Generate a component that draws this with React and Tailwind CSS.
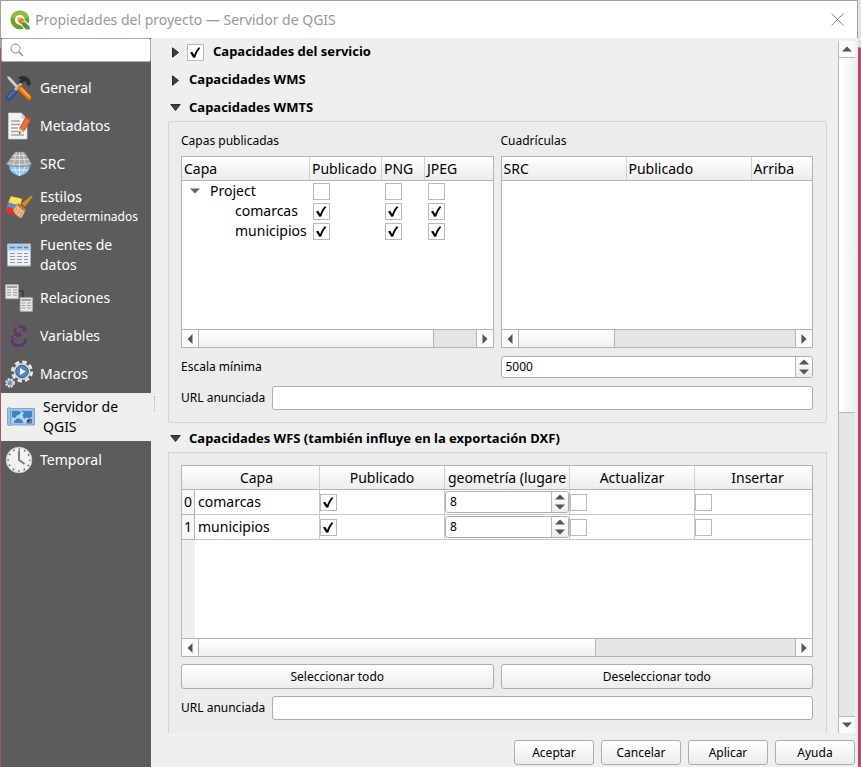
import { useState } from 'react';
import clsx from 'clsx';

const BTN = 'border border-[#adadad] rounded-[3px] bg-gradient-to-b from-white to-[#ececec] hover:to-white text-center';

function LogoIcon() {
  return (
    <svg viewBox="0 0 20 20" className="w-5 h-5 shrink-0">
      <circle cx="9.800" cy="9.800" r="7.200" fill="none" stroke="#6aa32f" strokeWidth="4.400" />
      <path d="M2.900 7.800a7.200 7.200 0 0 1 13.800 0" fill="none" stroke="#8fbf3f" strokeWidth="4.400" />
      <path d="M10.500 10.500l9.500 9.500" stroke="#fff" strokeWidth="6.500" />
      <path d="M12 12.200h3.200l4.500 4.600v2.700h-3.400L12 15.200z" fill="#589632" />
      <path d="M7.800 7.800h4.400l2.300 2.600v1h-2.600v2.700h-1.400L7.800 11.600z" fill="#ee7913" />
      <path d="M7.800 7.800h4.400l-1.700 2.400-2.700 1.400z" fill="#f3a53d" />
    </svg>
  );
}

function ToolsIcon() {
  return (
    <svg viewBox="0 0 26 26" className="w-[26px] h-[26px]">
      <path d="M1 1l3 1 11 12-2 2L2 4z" fill="#d3d7cf" stroke="#888" strokeWidth=".5" />
      <path d="M12 3c3-3 8-2.500 10 0 2 1.500 3 4 2.500 6l-1.500 2-2-1-1-3-2-.5-3 3-2.500-2 2.500-3-3-1.500z" fill="#2b2f31" />
      <path d="M14.500 7.500l2 2L8 18l-2-2z" fill="#b9bdb6" />
      <path d="M8 14.500l3 3-7 7c-1 1-2.500.7-3.300-.3-.8-.9-.8-2 .3-3z" fill="#2f5f9e" stroke="#1c3f72" strokeWidth=".8" />
      <path d="M8.300 16l-6 6" stroke="#6f9bd1" strokeWidth="1" />
      <path d="M12.500 12l2.500-1.500 10 10.500c.8 1 .6 2.600-.2 3.400-.9.9-2.400.8-3.400-.1L12 15z" fill="#f57900" stroke="#b85400" strokeWidth=".8" />
      <path d="M15 13l8.500 9" stroke="#fcb56a" strokeWidth="1.200" />
    </svg>
  );
}

function MetadataIcon() {
  return (
    <svg viewBox="0 0 26 28" className="w-[26px] h-7">
      <path d="M2.500 1h13l5.500 6v20H2.500z" fill="#f4f4f4" stroke="#d0d0d0" strokeWidth=".7" />
      <path d="M15.500 1v6H21z" fill="#cfcfcf" />
      <path d="M5 9h9M5 12.500h9M5 16h7M5 19.500h13M5 23h13" stroke="#a2a4a2" strokeWidth="1.300" />
      <path d="M20.500 4l5 3-7.500 12-4.500-2.700z" fill="#ea7238" stroke="#a84315" strokeWidth=".7" />
      <path d="M20.500 4l5 3-1.100 1.900-5-3.100z" fill="#b9483a" />
      <path d="M13.500 16.300l4.500 2.700-5 3.300z" fill="#e9c79a" />
      <path d="M13.200 19.900l1.600 1.100-1.900 1.300z" fill="#333" />
    </svg>
  );
}

function GlobeIcon() {
  return (
    <svg viewBox="0 0 26 26" className="w-[26px] h-[26px]">
      <circle cx="13.500" cy="14" r="10.700" fill="#8fc3ea" stroke="#4484bd" />
      <path d="M3 14h21M5 19h17M13.500 14v11M8.500 14c0 5 2 9 5 10.500M18.500 14c0 5-2 9-5 10.500" stroke="#e6f3fc" fill="none" />
      <path d="M9 1h9l3 4 5 8.500-6 1.500-7 .6-7-.6-6-1.500L6 5z" fill="#aaacaa" stroke="#777" strokeWidth=".7" />
      <path d="M6.500 4.500h14M4 8.500h19M1.500 12c8 2 16 2 23 0M13.500 1v14.500M10.500 1L7 15M16.500 1L20 15" stroke="#e9e9e9" strokeWidth=".7" fill="none" />
    </svg>
  );
}

function StylesIcon() {
  return (
    <svg viewBox="0 0 28 24" className="w-7 h-6">
      <path d="M6 1c4 2 7 1 11 3l-2 7-12-3z" fill="#fbe44b" />
      <path d="M3.500 7c4 2 7 2 11 3l-3 5-10-3z" fill="#5b8fd0" />
      <path d="M1.500 11c4 2 7 2 10 3l5 7c-6-.5-11-2-16-4z" fill="#e0352b" />
      <path d="M16 8.500L26 .8c1-.6 2.300.6 1.500 1.700L20 12z" fill="#d08a2e" stroke="#94601c" strokeWidth=".7" />
      <path d="M13.500 8l7.500 6.500-1 2-8-6.500z" fill="#b77b2d" />
      <path d="M12 10l8 6.500-3.500 6.500C12 22 9 18 8 14.500z" fill="#e6bf85" stroke="#b07f3c" strokeWidth=".7" />
      <path d="M12.500 12.500L10.500 16M15 14l-2.500 5M17.500 16l-2.500 5.500" stroke="#b98746" strokeWidth=".8" />
    </svg>
  );
}

function SourcesIcon() {
  return (
    <svg viewBox="0 0 26 24" className="w-[26px] h-6">
      <path d="M1.500 1h23v22h-23z" fill="#eef2f6" stroke="#9dbbd8" />
      <path d="M2 1.500h22v6H2z" fill="#a9cdee" />
      <path d="M4 4.500h5M11 4.500h5M18 4.500h4" stroke="#4f83b6" strokeWidth="1.600" />
      <path d="M4 10.500h5M11 10.500h5M18 10.500h4M4 13.500h5M11 13.500h5M18 13.500h4M4 16.500h5M11 16.500h5M18 16.500h4M4 19.500h5M11 19.500h5M18 19.500h4" stroke="#8d979f" strokeWidth="1.200" />
    </svg>
  );
}

function RelationsIcon() {
  return (
    <svg viewBox="0 0 28 28" className="w-7 h-7">
      <path d="M13 7h5v7" fill="none" stroke="#33383a" strokeWidth="1.300" />
      <path d="M.7.700h12.600v14H.7zM15.200 13.700h12.200v13.600H15.200z" fill="#e9e9e7" stroke="#b8b8b6" strokeWidth=".8" />
      <path d="M2 3h10M16.500 16h9.600" stroke="#8a8c8a" strokeWidth="1.500" />
      <path d="M2 6h4M8 6h4M2 8.500h4M8 8.500h4M2 11h4M8 11h4M16.500 19h4M22 19h4M16.500 21.500h4M22 21.500h4M16.500 24h4M22 24h4" stroke="#9c9e9c" strokeWidth="1.100" />
    </svg>
  );
}

function VariablesIcon() {
  return (
    <svg viewBox="0 0 20 24" className="w-5 h-6">
      <path d="M16 6C15.500 2.500 12.500 2 10 2.300 6.500 2.800 4.500 5.500 6 8.500c1 2 3 2.600 6 2.700-4.500 0-8.500 1.500-9 5-.4 3.300 2.500 5.300 6.500 5.300 3.300 0 6.500-1.500 7-5" fill="none" stroke="#5f3768" strokeWidth="2.800" strokeLinecap="round" />
      <circle cx="15.500" cy="5.700" r="2.100" fill="#5f3768" />
      <path d="M6 4.500c1-1.500 2.500-2.200 4-2.300M3.500 15c.8-1.500 2-2.200 3.500-2.700" stroke="#86608e" fill="none" />
    </svg>
  );
}

function MacrosIcon() {
  return (
    <svg viewBox="0 0 28 28" className="w-7 h-7">
      <circle cx="17" cy="11.500" r="9.300" fill="none" stroke="#e8e8e6" strokeWidth="3.500" strokeDasharray="4.300 3" />
      <circle cx="17" cy="11.500" r="8.200" fill="#dfe0de" stroke="#babdb6" strokeWidth=".6" />
      <circle cx="17" cy="11.500" r="6.300" fill="#4f87c4" stroke="#2f5f9a" />
      <path d="M15 8l5.700 3.500L15 15z" fill="#fff" />
      <circle cx="5" cy="23" r="4" fill="none" stroke="#dededc" strokeWidth="1.800" strokeDasharray="2 1.200" />
      <circle cx="5" cy="23" r="3" fill="#6c9bd0" stroke="#dededc" />
    </svg>
  );
}

function ServerIcon() {
  return (
    <svg viewBox="0 0 28 20" className="w-7 h-5">
      <path d="M.5 1.500C1.500.5 3 .5 4 1.500h23.500v16.500H4c-1.500 1-3 .7-3.500-.5z" fill="#9cc3e5" stroke="#6d9cc6" strokeWidth=".8" />
      <path d="M3.500 3v14.500" stroke="#6d9cc6" strokeWidth=".8" />
      <path d="M5 4h20v8l-5 4H5z" fill="#b5d6f0" />
      <path d="M5 4h7l2 1-1.500 2.500-2 .5L8 11l-3-1zM14 4h11v6l-3 1.500-2.500-1L17 12l-1.500-4 1.500-2zM7 14l4-3 4 2 1.500 3H7z" fill="#3d85c6" />
      <path d="M25 11.500l-5.500 5 .8-3.800z" fill="#1f3044" />
      <path d="M25 11.500v5h-5.500z" fill="#4b7fae" />
    </svg>
  );
}

function ClockIcon() {
  return (
    <svg viewBox="0 0 28 28" className="w-7 h-7">
      <circle cx="14" cy="14" r="12.800" fill="#f2f2f1" stroke="#c9cbc8" />
      <circle cx="14" cy="14" r="10.800" fill="none" stroke="#4a6e96" strokeWidth="1.700" strokeDasharray="1.500 4.150" strokeDashoffset=".7" />
      <path d="M14 4.500V14l5.500 4" fill="none" stroke="#7b7f7c" strokeWidth="2" />
    </svg>
  );
}

function Arrow({ dir, className }) {
  const paths = {
    up: 'M0 7.500l5-5 5 5z',
    down: 'M0 2.500l5 5 5-5z',
    left: 'M7.500 0l-5 5 5 5z',
    right: 'M2.500 0l5 5-5 5z',
  };
  return (
    <svg viewBox="0 0 10 10" className={clsx('shrink-0 fill-current', className)}>
      <path d={paths[dir]} />
    </svg>
  );
}

function Check({ checked = false, label }) {
  const [on, setOn] = useState(checked);
  return (
    <span className="inline-grid w-[17px] h-[17px] align-middle">
      <input
        type="checkbox"
        aria-label={label}
        checked={on}
        onChange={e => setOn(e.target.checked)}
        className="appearance-none col-start-1 row-start-1 w-full h-full border border-[#b9b9b9] bg-white"
      />
      {on && (
        <svg viewBox="0 0 17 17" className="col-start-1 row-start-1 w-full h-full pointer-events-none">
          <path d="M3 8.400l2.200-.7 2 3.300c1-3 2.600-5.600 4.600-7.700l1.500.6c-2.300 2.700-4 6-5 9.700l-2 .1z" fill="#000" />
        </svg>
      )}
    </span>
  );
}

function SpinBox({ value, label, id }) {
  return (
    <div className="flex h-[22px] border border-[#adadad] rounded-[3px] bg-white overflow-hidden">
      <input
        id={id}
        type="text"
        aria-label={label}
        defaultValue={value}
        className="flex-1 min-w-0 px-1 text-xs text-black outline-none"
      />
      <div className="flex flex-col w-[17px] border-l border-[#b9b9b9] bg-gradient-to-b from-white to-[#ececec] text-[#555]">
        <button aria-label="Aumentar" className="flex-1 flex items-center justify-center">
          <Arrow dir="up" className="w-[10px] h-[10px]" />
        </button>
        <button aria-label="Disminuir" className="flex-1 flex items-center justify-center">
          <Arrow dir="down" className="w-[10px] h-[10px]" />
        </button>
      </div>
    </div>
  );
}

function HScroll({ thumb }) {
  return (
    <div className="flex h-[18px] border-t border-[#b4b4b4] bg-[#e5e5e5] text-[#555]">
      <button aria-label="Desplazar a la izquierda" className="w-[17px] flex items-center justify-center border-r border-[#b4b4b4] bg-[#fafafa]">
        <Arrow dir="left" className="w-[10px] h-[10px]" />
      </button>
      <div className="flex-1">
        <div className={clsx('h-full border-r border-[#b4b4b4] bg-gradient-to-b from-white to-[#f0f0f0]', thumb)} />
      </div>
      <button aria-label="Desplazar a la derecha" className="w-[17px] flex items-center justify-center border-l border-[#b4b4b4] bg-[#fafafa]">
        <Arrow dir="right" className="w-[10px] h-[10px]" />
      </button>
    </div>
  );
}

const TH = 'h-6 p-0 font-normal border-b border-b-[#b4b4b4] border-r border-r-[#d0d0d0] last:border-r-0 bg-gradient-to-b from-white to-[#ececec] whitespace-nowrap overflow-hidden';

const PAGES = [
  { icon: ToolsIcon, label: 'General' },
  { icon: MetadataIcon, label: 'Metadatos' },
  { icon: GlobeIcon, label: 'SRC' },
  { icon: StylesIcon, label: 'Estilos', small: 'predeterminados', tall: true },
  { icon: SourcesIcon, label: 'Fuentes de datos', tall: true },
  { icon: RelationsIcon, label: 'Relaciones' },
  { icon: VariablesIcon, label: 'Variables' },
  { icon: MacrosIcon, label: 'Macros' },
  { icon: ServerIcon, label: 'Servidor de QGIS', tall: true },
  { icon: ClockIcon, label: 'Temporal' },
];

function Sidebar() {
  const [active, setActive] = useState('Servidor de QGIS');
  return (
    <aside className="w-[150px] shrink-0 bg-[#5c5c5c]">
      <div className="flex items-center h-6 pl-2 bg-white border border-[#a8a8a8] rounded-[2px]">
        <svg viewBox="0 0 14 14" className="w-[14px] h-[14px]" fill="none" stroke="#888">
          <circle cx="5.500" cy="5.500" r="4.500" />
          <path d="M8.500 8.500l4.500 4.500" strokeWidth="1.300" />
        </svg>
        <input type="search" aria-label="Buscar" className="flex-1 min-w-0 px-1 text-xs outline-none" />
      </div>
      <nav className="pt-[7px]">
        {PAGES.map(({ icon: Icon, label, small, tall }) => {
          const on = active === label;
          return (
            <button
              key={label}
              onClick={() => setActive(label)}
              className={clsx(
                'flex items-center w-full text-left text-sm leading-5',
                tall ? 'h-12' : 'h-[38px]',
                on ? 'bg-[#efefef] text-black pl-1.5 gap-2' : 'text-white pl-1 gap-[7px]',
              )}
            >
              <span className="flex w-7 shrink-0 justify-center">
                <Icon />
              </span>
              <span className={clsx(on && 'pr-6')}>
                {label}
                {small && <span className="block text-xs leading-5">{small}</span>}
              </span>
            </button>
          );
        })}
      </nav>
    </aside>
  );
}

function GroupTitle({ open, check, children }) {
  return (
    <h2 className={clsx('flex items-center pl-0.5 text-[13px] font-bold', open ? 'h-[27px]' : 'h-7')}>
      <button aria-label={open ? 'Contraer' : 'Expandir'} className={check ? 'mr-1.5' : 'mr-2'}>
        <svg viewBox="0 0 11 11" className="w-[11px] h-[11px] fill-[#404040] stroke-[#2a2a2a]">
          <path d={open ? 'M.8 2.500h9.400L5.500 8.500z' : 'M2.500.8v9.400l6-4.700z'} />
        </svg>
      </button>
      {check && (
        <span className="flex mr-[9px]">
          <Check checked label={children} />
        </span>
      )}
      {children}
    </h2>
  );
}

const TREE = [
  { name: 'Project', root: true },
  { name: 'comarcas' },
  { name: 'municipios' },
];

function LayerTree() {
  return (
    <div className="flex flex-col h-48 bg-white border border-[#b4b4b4] text-sm">
      <div className="flex-1 overflow-hidden">
        <table className="w-full table-fixed border-separate border-spacing-0 text-left">
          <colgroup>
            <col className="w-[128px]" />
            <col className="w-[72px]" />
            <col className="w-[43px]" />
            <col />
          </colgroup>
          <thead>
            <tr>
              {['Capa', 'Publicado', 'PNG', 'JPEG'].map(h => (
                <th key={h} className={clsx(TH, 'pl-0.5')}>{h}</th>
              ))}
            </tr>
          </thead>
          <tbody>
            {TREE.map(({ name, root }) => (
              <tr key={name} className="leading-5">
                <td className="p-0 whitespace-nowrap">
                  {root ? (
                    <span className="flex items-center pl-2 gap-[10px]">
                      <Arrow dir="down" className="w-[10px] h-[10px] text-[#666]" />
                      {name}
                    </span>
                  ) : (
                    <span className="block pl-[53px]">{name}</span>
                  )}
                </td>
                {['Publicado', 'PNG', 'JPEG'].map(c => (
                  <td key={c} className="p-0 pl-[3px] leading-none">
                    <Check checked={!root} label={`${name} ${c}`} />
                  </td>
                ))}
              </tr>
            ))}
          </tbody>
        </table>
      </div>
      <HScroll thumb="w-[85%]" />
    </div>
  );
}

function Grids() {
  return (
    <div className="flex flex-col h-48 bg-white border border-[#b4b4b4] text-sm">
      <div className="flex-1 overflow-hidden">
        <table className="w-full table-fixed border-separate border-spacing-0 text-left">
          <colgroup>
            <col className="w-[125px]" />
            <col className="w-[125px]" />
            <col />
          </colgroup>
          <thead>
            <tr>
              {['SRC', 'Publicado', 'Arriba'].map(h => (
                <th key={h} className={clsx(TH, 'pl-0.5')}>{h}</th>
              ))}
            </tr>
          </thead>
        </table>
      </div>
      <HScroll thumb="w-[35%]" />
    </div>
  );
}

function WfsTable() {
  const td = 'h-[25px] p-0 border-b border-r border-[#c8c8c8] last:border-r-0 leading-none';
  return (
    <div className="flex flex-col h-48 bg-white border border-[#b4b4b4] text-sm">
      <div className="flex-1 flex flex-col overflow-hidden">
        <table className="w-full table-fixed border-separate border-spacing-0">
          <colgroup>
            <col className="w-[13px]" />
            <col className="w-[125px]" />
            <col className="w-[125px]" />
            <col className="w-[125px]" />
            <col className="w-[125px]" />
            <col />
          </colgroup>
          <thead>
            <tr>
              <th colSpan={2} className={clsx(TH, 'pl-3')}>Capa</th>
              <th className={TH}>Publicado</th>
              <th className={TH}>geometría (lugare</th>
              <th className={TH}>Actualizar</th>
              <th className={clsx(TH, 'pl-2')}>Insertar</th>
            </tr>
          </thead>
          <tbody>
            {['comarcas', 'municipios'].map((name, i) => (
              <tr key={name}>
                <th className="p-0 font-normal border-b border-r border-[#b4b4b4] bg-[#f7f7f7]">{i}</th>
                <td className={clsx(td, 'pl-[3px]')}>{name}</td>
                <td className={td}><Check checked label={`${name} Publicado`} /></td>
                <td className={td}><SpinBox value="8" label={`${name} geometría`} /></td>
                <td className={td}><Check label={`${name} Actualizar`} /></td>
                <td className={td}><Check label={`${name} Insertar`} /></td>
              </tr>
            ))}
          </tbody>
        </table>
        <div className="flex-1 w-[13px] bg-[#efefef]" />
      </div>
      <HScroll thumb="w-2/3" />
    </div>
  );
}

function UrlRow({ id }) {
  return (
    <div className="flex items-center gap-[7px]">
      <label htmlFor={id} className="w-[84px] whitespace-nowrap">URL anunciada</label>
      <input id={id} type="text" className="flex-1 min-w-0 h-6 px-1 border border-[#adadad] rounded-[3px] bg-white outline-none" />
    </div>
  );
}

function VScroll() {
  return (
    <div className="flex flex-col w-[17px] mt-[3px] shrink-0 border-l border-[#b9b9b9] bg-[#e5e5e5] text-[#555]">
      <button aria-label="Desplazar hacia arriba" className="h-[17px] flex items-center justify-center border-b border-[#b9b9b9] bg-[#fafafa]">
        <Arrow dir="up" className="w-[10px] h-[10px]" />
      </button>
      <div className="flex-1 flex flex-col">
        <div className="basis-[54%] border-b border-[#b9b9b9] bg-gradient-to-r from-white to-[#f0f0f0]" />
      </div>
      <button aria-label="Desplazar hacia abajo" className="h-[17px] flex items-center justify-center border-t border-[#b9b9b9] bg-[#fafafa]">
        <Arrow dir="down" className="w-[10px] h-[10px]" />
      </button>
    </div>
  );
}

export default function App() {
  return (
    <div className='flex min-h-screen bg-[#efefef] text-xs text-black font-["Noto_Sans",sans-serif]'>
      <div className="w-px shrink-0 flex flex-col">
        <div className="h-12 bg-[#a0a0a0]" />
        <div className="flex-1 bg-[#a5506f]" />
      </div>

      <div className="flex-1 min-w-0 flex flex-col">
        <header className="flex items-center h-[38px] pl-[9px] pr-[13px] bg-white border-t border-r border-t-[#a0a0a0] border-r-[#a0a0a0]">
          <LogoIcon />
          <h1 className="ml-[5px] text-sm text-[#999]">Propiedades del proyecto — Servidor de QGIS</h1>
          <button aria-label="Cerrar" className="ml-auto">
            <svg viewBox="0 0 13 13" className="w-[13px] h-[13px]" stroke="#888" fill="none">
              <path d="M.5.500l12 12M12.500.500l-12 12" />
            </svg>
          </button>
        </header>

        <div className="flex-1 flex">
          <Sidebar />

          <main className="flex-1 min-w-0 flex flex-col pr-[3px]">
            <div className="flex-1 flex">
              <div className="w-[17px] shrink-0 flex flex-col pl-[3px]">
                <div className="mt-[358px] h-4 border-l border-dotted border-[#b0b0b0]" />
              </div>

              <div className="flex-1 min-w-0 flex flex-col pr-[11px]">
                <GroupTitle check>Capacidades del servicio</GroupTitle>
                <GroupTitle>Capacidades WMS</GroupTitle>

                <GroupTitle open>Capacidades WMTS</GroupTitle>
                <section className="p-3 pr-[13px] mb-0.5 border border-[#d4d4d4] rounded-[2px] bg-[#ececec]">
                  <div className="grid grid-cols-2 gap-x-[7px] gap-y-2 items-center">
                    <div className="leading-[14px]">Capas publicadas</div>
                    <div className="leading-[14px]">Cuadrículas</div>
                    <LayerTree />
                    <Grids />
                    <label htmlFor="scale">Escala mínima</label>
                    <SpinBox id="scale" value="5000" />
                    <div className="col-span-2">
                      <UrlRow id="wmts-url" />
                    </div>
                  </div>
                </section>

                <GroupTitle open>Capacidades WFS (también influye en la exportación DXF)</GroupTitle>
                <section className="flex-1 p-3 pr-[13px] border border-b-0 border-[#d4d4d4] bg-[#ececec]">
                  <div className="grid grid-cols-2 gap-[7px]">
                    <div className="col-span-2">
                      <WfsTable />
                    </div>
                    <button className={clsx(BTN, 'h-[25px]')}>Seleccionar todo</button>
                    <button className={clsx(BTN, 'h-[25px]')}>Deseleccionar todo</button>
                    <div className="col-span-2">
                      <UrlRow id="wfs-url" />
                    </div>
                  </div>
                </section>
              </div>

              <VScroll />
            </div>

            <footer className="flex justify-end gap-[7px] pt-[7px] pb-0.5">
              {['Aceptar', 'Cancelar', 'Aplicar', 'Ayuda'].map(b => (
                <button key={b} className={clsx(BTN, 'w-20 h-[25px]')}>{b}</button>
              ))}
            </footer>
          </main>
        </div>
      </div>

      {/* sliver of the window behind */}
      <div className="w-[3px] shrink-0 flex flex-col">
        <div className="h-12 bg-[#e2e2e2] border-b border-[#a0a0a0]" />
        <div className="flex-1 bg-[#b8486f]" />
      </div>
    </div>
  );
}
